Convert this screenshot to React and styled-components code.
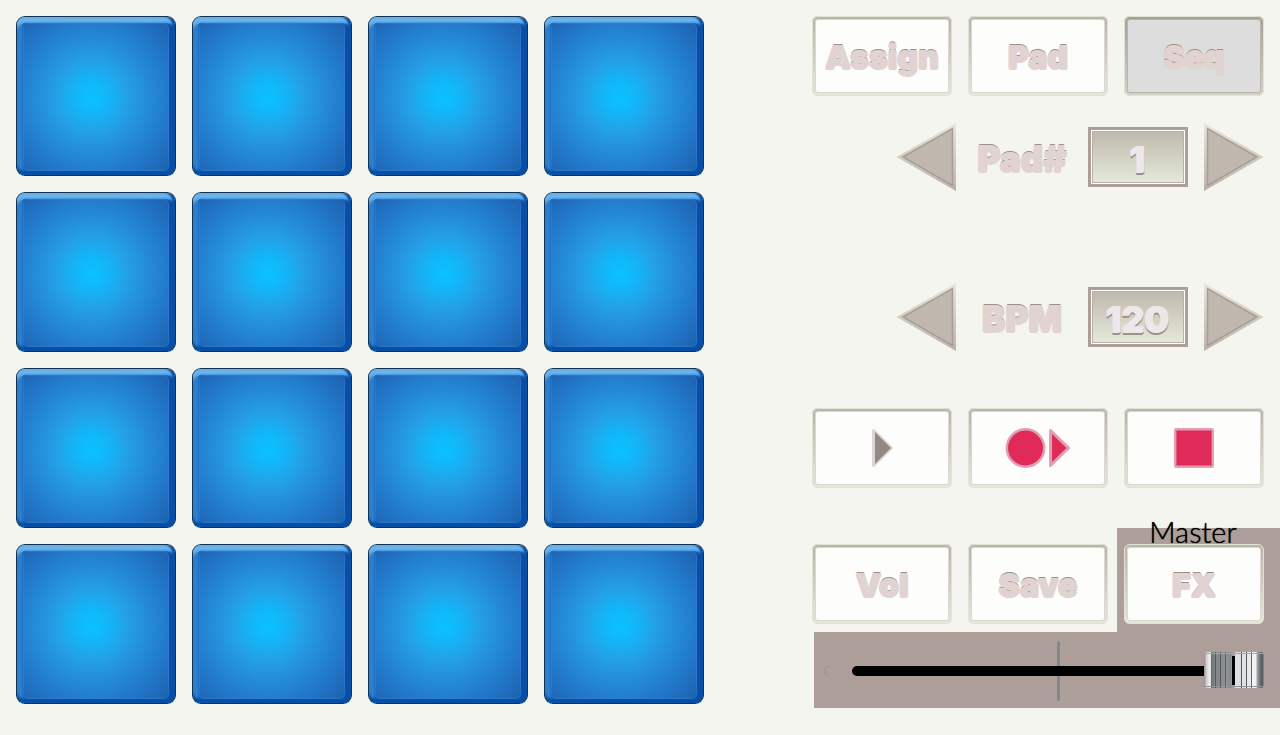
import React, { useState } from "react";
import styled, { createGlobalStyle, css } from "styled-components";

const GlobalStyle = createGlobalStyle`
  * { box-sizing: border-box; }
  body {
    margin: 0;
    background: #f5f5f0;
    font-family: Inter, "Liberation Sans", sans-serif;
  }
  button, input { font: inherit; margin: 0; }
`;

const embossed = css`
  color: #e0d3d1;
  font-size: 32px;
  font-weight: 900;
  line-height: 40px;
  text-shadow: 1px 0 #e0d3d1, -1px 0 #e0d3d1, 0 1px #e0d3d1, 0 -1px #e0d3d1, 0 -2px #9c9289;
`;

const Page = styled.main`
  display: flex;
  justify-content: space-between;
  gap: 32px;
  padding: 16px 0 16px 16px;
`;

const PadGrid = styled.section`
  flex: 0 1 688px;
  align-self: flex-start;
  display: grid;
  grid-template-columns: repeat(4, 1fr);
  gap: 16px;
`;

const PadButton = styled.button`
  aspect-ratio: 1;
  padding: 1px;
  border: 0;
  border-radius: 9px;
  background: #17304e;
  cursor: pointer;
`;

const PadFace = styled.span`
  display: block;
  height: 100%;
  padding: 6px;
  border-radius: 8px;
  background: #0a4ea8;
  box-shadow:
    inset -4px 0 2px -1px #0a4ea8,
    inset 0 -5px 2px -1px #0550a8,
    inset 0 7px 2px -1px #68b4ea,
    inset 7px 0 2px -1px #2a80d0;
  &::after {
    content: "";
    display: block;
    height: 100%;
    border: 1px solid rgba(60, 135, 205, 0.4);
    border-radius: 5px;
    background: radial-gradient(circle at 47% 50%, #0cc0ff 0, #10b8fa 14px, #24a0e6 36px, #258edb 54px, #227acb 76px, #1f62b4 104px) border-box;
  }
`;

const Controls = styled.section`
  flex: 0 0 468px;
  display: flex;
  flex-direction: column;
`;

const ButtonRow = styled.div`
  display: grid;
  grid-template-columns: repeat(3, 1fr);
  gap: 16px;
  padding-right: 16px;
`;

const KeyButton = styled.button`
  ${embossed}
  display: flex;
  align-items: center;
  justify-content: center;
  width: 100%;
  height: 80px;
  padding: 4px 0 0;
  border: 3px solid transparent;
  border-radius: 6px;
  background:
    linear-gradient(${(p) => (p.$active ? "#dddddd, #dddddd" : "#fdfdfb, #fdfdfb")}) padding-box,
    linear-gradient(${(p) => (p.$active ? "#a59e93, #d2d3c6" : "#b9b2a7, #e6e8da")}) border-box;
  box-shadow:
    inset 0 0 0 1px ${(p) => (p.$active ? "#b9b2ae" : "#ddd6d2")},
    inset 0 1px 0 #b9b0ab;
  outline: 1px solid #e0e2d7;
  outline-offset: -1px;
  cursor: pointer;
`;

const IconButton = styled(KeyButton)`
  padding: 0;
`;

const StepperRow = styled.div`
  display: flex;
  align-items: center;
  justify-content: flex-end;
  gap: 16px;
  height: 68px;
  margin-top: ${(p) => p.$gap}px;
  padding-right: 16px;
`;

const ArrowButton = styled.button`
  width: 60px;
  height: 68px;
  padding: 0;
  border: 0;
  background: none;
  cursor: pointer;
  svg { display: block; }
`;

const StepperLabel = styled.label`
  ${embossed}
  width: 100px;
  padding-top: 4px;
  font-size: 35px;
  text-align: center;
`;

const Display = styled.div`
  width: 100px;
  height: 60px;
  padding: 1px;
  border: 3px solid #ad9e9a;
  background: #ffffff;
`;

const DisplayInput = styled.input`
  ${embossed}
  display: block;
  width: 100%;
  height: 100%;
  padding: 4px 2px 0 0;
  border: 1px solid #b9b0a7;
  background: linear-gradient(#bfb9ae, #e4e8d9);
  color: #eee6e8;
  font-size: 35px;
  text-shadow: 1px 0 #eee6e8, 0 1px #eee6e8, 1px 2px #9a9189, 0 3px #9a9189;
  text-align: center;
`;

const Transport = styled(ButtonRow)`
  margin-top: 57px;
`;

const BottomRow = styled.div`
  display: grid;
  grid-template-columns: 140px 140px 1fr;
  column-gap: 16px;
  margin-top: 40px;
`;

const PlainCell = styled.div`
  padding-top: 16px;
`;

const MasterCell = styled.div`
  position: relative;
  margin-left: -7px;
  padding: 16px 16px 8px 7px;
  background: #ad9e9a;
`;

const MasterLabel = styled.span`
  position: absolute;
  top: -12px;
  left: 0;
  right: 11px;
  color: #000000;
  font-family: Lato, "Liberation Sans", sans-serif;
  font-size: 29px;
  font-weight: 300;
  line-height: 32px;
  text-shadow: 0 0 1px #000000;
  text-align: center;
  pointer-events: none;
`;

const FaderPanel = styled.div`
  position: relative;
  display: flex;
  align-items: center;
  height: 76px;
  margin-left: 2px;
  padding: 2px 16px 0 38px;
  background: #ad9e9a;
`;

const CenterMark = styled.span`
  position: absolute;
  top: 9px;
  left: 243px;
  width: 3px;
  height: 60px;
  border-radius: 2px;
  background: #7b8990;
`;

const EndMark = styled.span`
  position: absolute;
  top: 34px;
  left: 10px;
  width: 5px;
  height: 10px;
  border: 1px dotted #93857f;
  border-right: 0;
  border-radius: 5px 0 0 5px;
`;

const Fader = styled.input`
  position: relative;
  appearance: none;
  width: 100%;
  height: 36px;
  background: none;
  cursor: pointer;
  &::-webkit-slider-runnable-track {
    height: 10px;
    border-radius: 5px;
    background: #000000;
  }
  &::-webkit-slider-thumb {
    appearance: none;
    width: 60px;
    height: 36px;
    margin-top: -14px;
    border-radius: 3px;
    background:
      linear-gradient(#a5a5a6, #a5a5a6) 0 1px / 100% 1px no-repeat,
      linear-gradient(#909293, #909293) 0 34px / 100% 1px no-repeat,
      linear-gradient(#ad9e9a, #ad9e9a) 28px 0 / 3px 4px no-repeat,
      linear-gradient(#ad9e9a, #ad9e9a) 28px 33px / 3px 3px no-repeat,
      linear-gradient(90deg,
        #8c8885 0, #c8c8c8 2px, #f4f4f4 6px, #d0d0d0 7px,
        #6c7073 7px, #82878a 11px, #55595c 11px, #55595c 12px,
        #83888b 12px, #83888b 16px, #54585b 16px, #54585b 17px,
        #8a8e90 17px, #8a8e90 21px, #5d6164 21px, #5d6164 22px,
        #929597 22px, #85898b 27px, #b0a5a2 28px,
        #000000 28px, #000000 31px,
        #e0e1e2 31px, #dcddde 37px, #55595c 37px, #55595c 38px,
        #e0e1e2 38px, #e0e1e2 42px, #55595c 42px, #55595c 43px,
        #e7e8e8 43px, #e7e8e8 47px, #606467 47px, #606467 48px,
        #f6f6f6 48px, #f0f0f0 52px, #a5a8aa 53px, #5b6062 57px, #5b6062 59px, #a0a2a3 60px);
  }
`;

const ArrowIcon = ({ right }) => (
  <svg width="60" height="68" viewBox="0 0 60 68" aria-hidden="true">
    <defs>
      <linearGradient id={right ? "bevelRight" : "bevelLeft"} x1="0" y1="0" x2="0" y2="1">
        <stop offset="0" stopColor="#e4e8da" />
        <stop offset="1" stopColor="#bab2a8" />
      </linearGradient>
    </defs>
    <g transform={right ? "translate(60 0) scale(-1 1)" : undefined}>
      <path d="M0.500 34 60 0V68Z" fill={`url(#${right ? "bevelRight" : "bevelLeft"})`} />
      <path d="M7 34 56.500 5.500V62.500Z" fill="#c0b8af" stroke="#aa9d98" strokeWidth="1.5" />
    </g>
  </svg>
);

const PlayIcon = () => (
  <svg width="40" height="40" viewBox="0 0 40 40" aria-hidden="true">
    <path d="M11.500 2.500 29.500 20 11.500 37.500Z" fill="#e0d4d6" stroke="#e0d4d6" strokeWidth="3" strokeLinejoin="round" />
    <path d="M13 4 29 20 13 36Z" fill="#938a83" />
  </svg>
);

const RecordIcon = () => (
  <svg width="66" height="40" viewBox="0 0 66 40" aria-hidden="true">
    <circle cx="20.500" cy="20" r="18.700" fill="#e02a58" stroke="#e0a0b2" strokeWidth="2.500" />
    <path d="M45.500 2.500 63.500 20 45.500 37.500Z" fill="#e02a58" stroke="#e0a0b2" strokeWidth="3" strokeLinejoin="round" />
  </svg>
);

const StopIcon = () => (
  <svg width="40" height="40" viewBox="0 0 40 40" aria-hidden="true">
    <rect x="1.200" y="1.200" width="37.600" height="37.600" rx="1" fill="#e02a58" stroke="#e0a0b2" strokeWidth="2.400" />
  </svg>
);

function Stepper({ id, label, gap, value, onChange }) {
  return (
    <StepperRow $gap={gap}>
      <ArrowButton type="button" aria-label={`Decrease ${label}`} onClick={() => onChange(Math.max(1, Number(value) - 1))}>
        <ArrowIcon />
      </ArrowButton>
      <StepperLabel htmlFor={id}>{label}</StepperLabel>
      <Display>
        <DisplayInput id={id} type="text" value={value} onChange={(e) => onChange(e.target.value)} />
      </Display>
      <ArrowButton type="button" aria-label={`Increase ${label}`} onClick={() => onChange(Number(value) + 1)}>
        <ArrowIcon right />
      </ArrowButton>
    </StepperRow>
  );
}

export default function App() {
  const [mode, setMode] = useState("Seq");
  const [pad, setPad] = useState(1);
  const [bpm, setBpm] = useState(120);
  const [level, setLevel] = useState(100);

  return (
    <>
      <GlobalStyle />
      <Page>
        <PadGrid aria-label="Pads">
          {Array.from({ length: 16 }, (_, i) => (
            <PadButton key={i} type="button" aria-label={`Pad ${i + 1}`}>
              <PadFace />
            </PadButton>
          ))}
        </PadGrid>
        <Controls aria-label="Controls">
          <ButtonRow>
            {["Assign", "Pad", "Seq"].map((name) => (
              <KeyButton key={name} type="button" $active={mode === name} aria-pressed={mode === name} onClick={() => setMode(name)}>
                {name}
              </KeyButton>
            ))}
          </ButtonRow>
          <Stepper id="pad-number" label="Pad#" gap={27} value={pad} onChange={setPad} />
          <Stepper id="bpm" label="BPM" gap={92} value={bpm} onChange={setBpm} />
          <Transport>
            <IconButton type="button" aria-label="Play"><PlayIcon /></IconButton>
            <IconButton type="button" aria-label="Record"><RecordIcon /></IconButton>
            <IconButton type="button" aria-label="Stop"><StopIcon /></IconButton>
          </Transport>
          <BottomRow>
            <PlainCell><KeyButton type="button">Vol</KeyButton></PlainCell>
            <PlainCell><KeyButton type="button">Save</KeyButton></PlainCell>
            <MasterCell>
              <KeyButton type="button">FX</KeyButton>
              <MasterLabel id="master-label">Master</MasterLabel>
            </MasterCell>
          </BottomRow>
          <FaderPanel>
            <EndMark />
            <CenterMark />
            <Fader type="range" min="0" max="100" value={level} aria-labelledby="master-label" onChange={(e) => setLevel(Number(e.target.value))} />
          </FaderPanel>
        </Controls>
      </Page>
    </>
  );
}
